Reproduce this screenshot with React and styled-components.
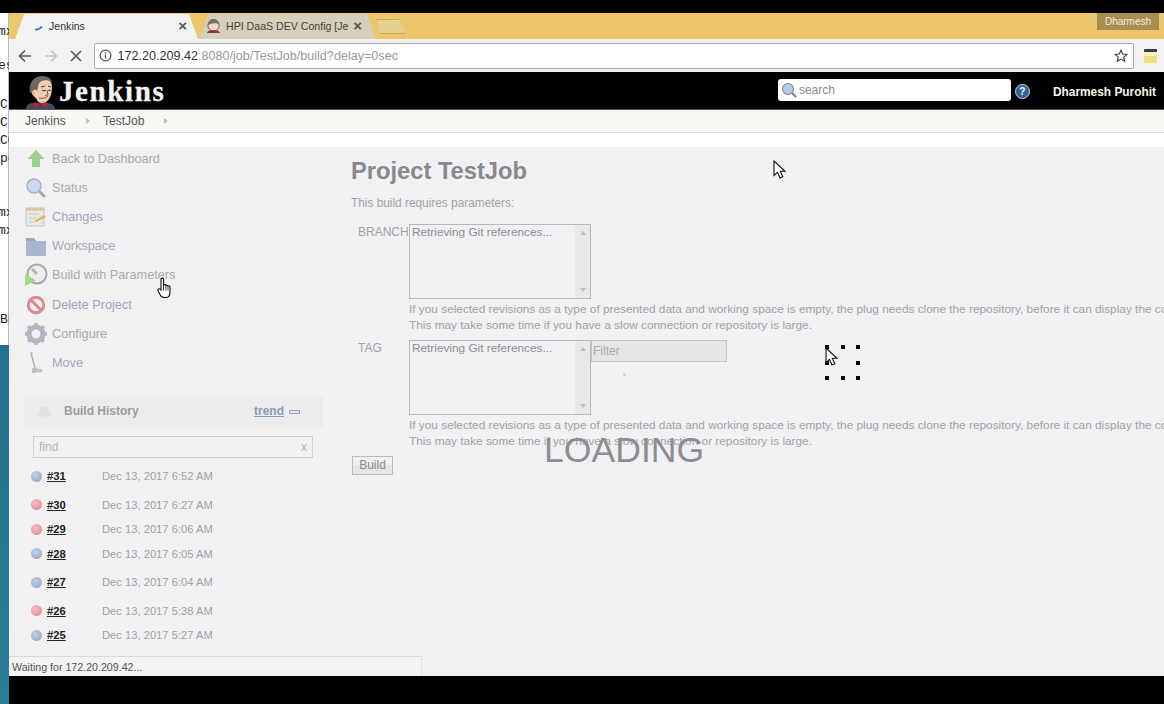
import styled, { createGlobalStyle } from "styled-components";

const GlobalStyle = createGlobalStyle`
  html, body {
    margin: 0;
    padding: 0;
    height: 704px;
    overflow: hidden;
    background: #000;
    font-family: "Liberation Sans", Arial, sans-serif;
  }
`;

const Screen = styled.div`
  position: relative;
  width: 1164px;
  height: 704px;
  overflow: hidden;
  display: flex;
  background: #000;
`;

const Desk = styled.div`
  width: 9px;
  flex: none;
  padding-top: 13px;
  display: flex;
  flex-direction: column;
`;
const DeskPaper = styled.div`
  height: 332px;
  background: #fff;
  overflow: hidden;
  box-shadow: inset -1px 0 0 #bbb;
`;
const DeskLine = styled.div`
  margin-top: ${(p) => p.$gap}px;
  margin-left: ${(p) => p.$shift || 0}px;
  height: 14px;
  font: 13px/14px "Liberation Mono", monospace;
  color: #141c2a;
  white-space: nowrap;
`;
const DeskWall = styled.div`
  flex: 1;
  background: linear-gradient(#24708f, #2c7d9c);
`;

const Browser = styled.div`
  flex: 1;
  min-width: 0;
  display: flex;
  flex-direction: column;
  padding-top: 13px;
  padding-bottom: 28px;
`;

const TabStrip = styled.div`
  height: 26px;
  flex: none;
  background: #eec76c;
  display: flex;
  align-items: flex-end;
  padding-left: 6px;
  position: relative;
`;
const Tab = styled.div`
  width: ${(p) => p.$width}px;
  height: 25px;
  margin-right: ${(p) => p.$gap || 0}px;
  background: ${(p) => (p.$active ? "#f2f2f2" : "#d6cfb9")};
  clip-path: polygon(0 100%, 9px 0, calc(100% - 9px) 0, 100% 100%);
  display: flex;
  align-items: center;
  padding: 0 ${(p) => p.$end}px 2px ${(p) => p.$pad}px;
  box-sizing: border-box;
  font-size: 10.6px;
  color: ${(p) => (p.$active ? "#333" : "#444")};
`;
const TabTitle = styled.span`
  flex: 1;
  overflow: hidden;
  white-space: nowrap;
  margin-left: ${(p) => p.$gap}px;
`;
const TabClose = styled.span`
  font-size: 15px;
  line-height: 15px;
  font-weight: bold;
  color: #555;
`;
const NewTab = styled.div`
  width: 30px;
  height: 15px;
  margin-bottom: 5px;
  background: #e6d08f;
  border: 1px solid #c9ab5f;
  box-sizing: border-box;
  clip-path: polygon(0 0, 78% 0, 100% 100%, 12% 100%);
`;
const UserBadge = styled.div`
  position: absolute;
  right: 5px;
  top: 0;
  width: 62px;
  height: 17px;
  background: #a88e52;
  color: #f3eee0;
  font-size: 10px;
  line-height: 17px;
  text-align: center;
`;

const Toolbar = styled.div`
  height: 33px;
  flex: none;
  background: #f2f2f2;
  display: flex;
  align-items: center;
  box-sizing: border-box;
  padding: 0 0 0 8px;
`;
const NavIcon = styled.svg`
  width: 16px;
  height: 16px;
  flex: none;
  margin-right: ${(p) => p.$gap}px;
`;
const Omnibox = styled.div`
  width: 1040px;
  height: 26px;
  flex: none;
  background: #fff;
  border: 1px solid #a9a9a9;
  border-radius: 2px;
  box-sizing: border-box;
  display: flex;
  align-items: center;
  padding: 0 5px 0 4px;
  font-size: 12.6px;
  color: #999;
`;
const Host = styled.span`
  color: #333;
`;
const UrlText = styled.div`
  flex: 1;
  margin-left: 6px;
  white-space: nowrap;
`;
const Extension = styled.div`
  width: 13px;
  height: 14px;
  margin-left: 10px;
  background: linear-gradient(#3a3a3a 0 3px, #f6efc0 3px 7px, #ecdf7d 7px);
  border-radius: 1px;
`;

const Header = styled.div`
  height: 37px;
  flex: none;
  background: #000;
  display: flex;
  align-items: center;
  padding: 0 8px 0 17px;
  border-bottom: 1px solid #555;
`;
const LogoBox = styled.div`
  width: 30px;
  height: 33px;
  flex: none;
  align-self: flex-end;
`;
const Brand = styled.div`
  font: bold 29px/30px "Liberation Serif", serif;
  letter-spacing: 1.6px;
  color: #f4f4f0;
  -webkit-text-stroke: 0.3px #f4f4f0;
  margin-left: 3px;
  margin-right: auto;
`;
const SearchBox = styled.div`
  width: 233px;
  height: 22px;
  margin-bottom: 1px;
  background: #fff;
  border-radius: 3px;
  box-sizing: border-box;
  display: flex;
  align-items: center;
  gap: 2px;
  padding-left: 3px;
  font-size: 12px;
  color: #8b8b8b;
`;
const HelpDot = styled.div`
  width: 13px;
  height: 13px;
  margin: 2px 0 0 4px;
  border-radius: 50%;
  background: #34609c;
  border: 1px solid #c9d5e6;
  color: #fff;
  font: bold 10px/13px "Liberation Sans", sans-serif;
  text-align: center;
`;
const UserName = styled.div`
  margin: 2px 0 0 23px;
  font-size: 11.9px;
  font-weight: bold;
  color: #f6f6ee;
  white-space: nowrap;
`;

const Crumbs = styled.div`
  height: 23px;
  flex: none;
  background: #f8f8f5;
  border-bottom: 1px solid #dcdcd8;
  box-sizing: border-box;
  display: flex;
  align-items: center;
  padding-left: 16px;
  font-size: 12px;
  color: #555;
`;
const Crumb = styled.span`
  width: ${(p) => p.$width}px;
  flex: none;
`;
const CrumbArrow = styled.i`
  width: 0;
  height: 0;
  flex: none;
  margin-right: ${(p) => p.$gap}px;
  border-left: 4px solid #bdbdbd;
  border-top: 3.5px solid transparent;
  border-bottom: 3.5px solid transparent;
`;
const WhiteGap = styled.div`
  height: 14px;
  flex: none;
  background: #fff;
`;

const Page = styled.div`
  flex: 1;
  min-height: 0;
  background: #f1f0f2;
  display: flex;
  overflow: hidden;
`;
const Side = styled.div`
  width: 342px;
  flex: none;
  box-sizing: border-box;
  padding: 0 0 0 15px;
`;
const Tasks = styled.div`
  height: 251px;
  margin-top: -3px;
`;
const Task = styled.div`
  height: 29.2px;
  display: flex;
  align-items: center;
  font-size: 12.7px;
  color: ${(p) => p.$color || "#a9a8b0"};
`;
const TaskIcon = styled.svg`
  width: 24px;
  height: 24px;
  flex: none;
  margin-right: 4px;
`;
const PaneHead = styled.div`
  width: 299px;
  height: 32px;
  background: #ecebed;
  display: flex;
  align-items: center;
  box-sizing: border-box;
  padding-left: 12px;
  font-size: 12px;
  font-weight: bold;
  color: #9c9ba0;
`;
const PaneTitle = styled.span`
  margin-left: 12px;
  flex: none;
  width: 190px;
`;
const Trend = styled.span`
  color: #8f9cb8;
  text-decoration: underline;
`;
const TrendBar = styled.i`
  width: 11px;
  height: 4px;
  margin-left: 5px;
  margin-top: 2px;
  border: 1px solid #98a8c8;
  box-sizing: border-box;
  background: #dfe5f0;
`;
const Find = styled.div`
  width: 280px;
  height: 22px;
  margin: 9px 0 2px 9px;
  border: 1px solid #cfcfd2;
  box-sizing: border-box;
  display: flex;
  justify-content: space-between;
  align-items: center;
  padding: 0 5px;
  font-size: 12px;
  color: #b4b4b6;
`;
const Row = styled.div`
  height: ${(p) => (p.$tall ? 32.5 : 24.5)}px;
  display: flex;
  align-items: center;
  padding-left: 7px;
  font-size: 11.2px;
  color: #a2a1a6;
`;
const Ball = styled.span`
  width: 11px;
  height: 11px;
  flex: none;
  border-radius: 50%;
  background: ${(p) =>
    p.$failed
      ? "radial-gradient(circle at 40% 35%, #f6bcc4, #e5808f)"
      : "radial-gradient(circle at 40% 35%, #c3d1e6, #8da1c4)"};
`;
const BuildNo = styled.a`
  width: 55px;
  flex: none;
  margin-left: 5px;
  font-weight: bold;
  color: #222;
  text-decoration: underline;
`;

const Content = styled.div`
  flex: 1;
  min-width: 0;
  padding: 11px 0 0 0;
  overflow: hidden;
  color: #a3a2a7;
`;
const Title = styled.h1`
  margin: 0;
  font-size: 23.7px;
  line-height: 26px;
  color: #89888c;
`;
const Intro = styled.div`
  margin: 12px 0 0;
  font-size: 11.85px;
  line-height: 14px;
`;
const Param = styled.div`
  display: flex;
  margin-top: ${(p) => p.$gap}px;
`;
const ParamName = styled.div`
  width: 58px;
  flex: none;
  padding: 0 0 0 7px;
  box-sizing: border-box;
  font-size: 12px;
  line-height: 16px;
`;
const ParamBody = styled.div`
  min-width: 0;
`;
const ParamRow = styled.div`
  display: flex;
  align-items: flex-start;
`;
const ListBox = styled.div`
  width: 182px;
  height: 75px;
  flex: none;
  box-sizing: border-box;
  border: 1px solid #b9b8bc;
  display: flex;
  font-size: 11.8px;
  line-height: 14px;
  color: #8f8e94;
`;
const ListText = styled.div`
  flex: 1;
  padding: 0 2px;
`;
const ScrollBar = styled.div`
  width: 15px;
  background: #e9e9ea;
  display: flex;
  flex-direction: column;
  justify-content: space-between;
  align-items: center;
  padding: 6px 0;
`;
const ScrollArrow = styled.i`
  width: 0;
  height: 0;
  border-left: 3px solid transparent;
  border-right: 3px solid transparent;
  ${(p) => (p.$down ? "border-top: 4px solid #bdbdbf;" : "border-bottom: 4px solid #bdbdbf;")}
`;
const FilterBox = styled.div`
  width: 136px;
  height: 22px;
  flex: none;
  box-sizing: border-box;
  border: 1px solid #c4c4c6;
  background: #e6e6e7;
  padding-left: 1px;
  font-size: 12px;
  line-height: 20px;
  color: #aaa9ad;
`;
const Help = styled.div`
  margin-top: 2px;
  font-size: 11.83px;
  line-height: 16px;
  white-space: nowrap;
`;
const BuildButton = styled.div`
  width: 41px;
  height: 19px;
  margin: 7px 0 0 1px;
  box-sizing: border-box;
  border: 1px solid #bcbcbe;
  background: linear-gradient(#f1f0f2 50%, #e6e6e8 50%);
  font-size: 12px;
  line-height: 17px;
  text-align: center;
  color: #8a898d;
`;

const Loading = styled.div`
  position: absolute;
  left: 544px;
  top: 432px;
  font-size: 35.6px;
  line-height: 37px;
  color: #8e8d91;
`;
const Speck = styled.i`
  position: absolute;
  left: 623px;
  top: 373px;
  width: 3px;
  height: 3px;
  border-radius: 50%;
  background: #d2d2d4;
`;
const Spinner = styled.div`
  position: absolute;
  left: 825px;
  top: 345px;
  width: 35px;
  height: 35px;
  display: grid;
  grid-template-columns: repeat(3, 4px);
  grid-template-rows: repeat(3, 4px);
  justify-content: space-between;
  align-content: space-between;
`;
const SpinDot = styled.i`
  background: ${(p) => (p.$off ? "transparent" : "#000")};
`;
const Pointer = styled.svg`
  position: absolute;
  left: ${(p) => p.$x}px;
  top: ${(p) => p.$y}px;
  width: ${(p) => p.$w || 14}px;
  height: ${(p) => p.$h || 20}px;
`;
const StatusBar = styled.div`
  position: absolute;
  left: 9px;
  top: 656px;
  width: 413px;
  height: 20px;
  box-sizing: border-box;
  background: #f3f3f3;
  border-top: 1px solid #d9d9d9;
  border-right: 1px solid #e2e2e2;
  padding-left: 3px;
  font-size: 10.65px;
  line-height: 20px;
  color: #555;
`;

const deskLines = [
  { gap: 12, text: "mx", shift: -2 },
  { gap: 20, text: "es", shift: -2 },
  { gap: 25, text: "Cl" },
  { gap: 4, text: "Cl" },
  { gap: 4, text: "CO" },
  { gap: 4, text: "pe" },
  { gap: 40, text: "mx", shift: -2 },
  { gap: 4, text: "mx", shift: -2 },
  { gap: 75, text: "BF" },
];

const builds = [
  { id: 31, date: "Dec 13, 2017 6:52 AM", tall: true },
  { id: 30, date: "Dec 13, 2017 6:27 AM", failed: true },
  { id: 29, date: "Dec 13, 2017 6:06 AM", failed: true },
  { id: 28, date: "Dec 13, 2017 6:05 AM" },
  { id: 27, date: "Dec 13, 2017 6:04 AM", tall: true },
  { id: 26, date: "Dec 13, 2017 5:38 AM", failed: true },
  { id: 25, date: "Dec 13, 2017 5:27 AM" },
];

const helpText =
  "If you selected revisions as a type of presented data and working space is empty, the plug needs clone the repository, before it can display the content.";
const helpText2 = "This may take some time if you have a slow connection or repository is large.";

function ButlerLogo() {
  return (
    <svg viewBox="0 0 30 33" width="30" height="33">
      <path d="M0 33c0-4 3-6 8-6h12c5 0 9 2 9 6z" fill="#3d4d63" />
      <path d="M7 11C7 4 11 1 16 1c6 0 10 4 10 10 0 8-3 16-10 16-3 0-5-2-6-5-2 0-3-5-3-11z" fill="#efcdb0" />
      <path d="M4 17C2 7 8 0 16 0c5 0 9 2 10 6-5-3-11-2-13 1-1 3-1 6-2 8-1-2-3-2-4 0-1 1-2 2-3 2z" fill="#6a6661" />
      <path d="M8 15c-2-1-3 1-2 3s2 3 3 2z" fill="#e3b293" />
      <path d="M15 11l4-1M22 10l3 1M16 14c1 1 3 1 4 0M22 14c1 1 2 0 3 0" stroke="#3a3a3a" strokeWidth="1" fill="none" />
      <path d="M21 14l1 5-3 .5M13 22c4 1 7 0 9-2" stroke="#8a5a45" strokeWidth="1" fill="none" />
      <path d="M8 26l6 2.500-6 3.500zM21 26l-6 2.500 6 3.500z" fill="#c8202c" />
      <circle cx="14.500" cy="29" r="1.600" fill="#a81822" />
    </svg>
  );
}

function TabFavicon() {
  return (
    <svg viewBox="0 0 16 16" width="15" height="15">
      <circle cx="8" cy="8" r="6" fill="#ecd9c6" stroke="#6b5a4d" />
      <path d="M2 8c0-5 3-7 6-7s6 2 6 6c-3-2-8-2-12 1z" fill="#77706a" />
      <path d="M1 16c1-3 4-3 7-3s6 0 7 3z" fill="#8a3a30" />
    </svg>
  );
}

function HandCursor() {
  return (
    <Pointer $x={157} $y={277} $w={15} $h={22} viewBox="0 0 15 22">
      <path
        d="M4 2.200c0-1.500 2.500-1.500 2.500 0V9l.4-1.400c1-.6 2 0 2 .8.8-.6 2-.2 2.100.7.8-.4 2 0 2 1V15c0 3-1.500 5.500-4 5.500H7c-2 0-3-1-4-3L1 13.500c-.5-1.200.9-2.300 2-1.300l1 1z"
        fill="#fff"
        stroke="#111"
        strokeWidth="1.100"
      />
      <path d="M6.500 9v4.500M8.900 8.500v5M11 9.200v4.300" stroke="#111" strokeWidth="0.8" />
    </Pointer>
  );
}

function Arrow({ x, y }) {
  return (
    <Pointer $x={x} $y={y} viewBox="0 0 14 20">
      <path d="M1 1v14.500l3.500-3.200 2.500 5.700 2.800-1.200-2.500-5.500H12z" fill="#fff" stroke="#111" strokeWidth="1.100" />
    </Pointer>
  );
}

export default function App() {
  return (
    <Screen>
      <GlobalStyle />
      <Desk>
        <DeskPaper>
          {deskLines.map((l, i) => (
            <DeskLine key={i} $gap={l.gap} $shift={l.shift}>
              {l.text}
            </DeskLine>
          ))}
        </DeskPaper>
        <DeskWall />
      </Desk>

      <Browser>
        <TabStrip>
          <Tab $active $width={183} $pad={19} $end={11} $gap={1}>
            <svg viewBox="0 0 10 10" width="10" height="10">
              <path d="M1 8.500c3 .5 5-.5 7-3" stroke="#3f6fd0" strokeWidth="1.600" fill="none" />
            </svg>
            <TabTitle $gap={5}>Jenkins</TabTitle>
            <TabClose>×</TabClose>
          </Tab>
          <Tab $width={177} $pad={7} $end={14}>
            <TabFavicon />
            <TabTitle $gap={5}>HPI DaaS DEV Config [Je</TabTitle>
            <TabClose>×</TabClose>
          </Tab>
          <NewTab />
          <UserBadge>Dharmesh</UserBadge>
        </TabStrip>

        <Toolbar>
          <NavIcon $gap={10} viewBox="0 0 16 16">
            <path d="M14 8H2.500M8 2.500 2.500 8 8 13.500" stroke="#5a5a5a" strokeWidth="1.700" fill="none" />
          </NavIcon>
          <NavIcon $gap={9} viewBox="0 0 16 16">
            <path d="M2 8h11.500M8 2.500 13.500 8 8 13.500" stroke="#c6c6c6" strokeWidth="1.700" fill="none" />
          </NavIcon>
          <NavIcon $gap={9.500} viewBox="0 0 16 16">
            <path d="M3 3l10 10M13 3 3 13" stroke="#5a5a5a" strokeWidth="1.700" fill="none" />
          </NavIcon>
          <Omnibox>
            <svg viewBox="0 0 14 14" width="13" height="13">
              <circle cx="7" cy="7" r="5.800" fill="none" stroke="#555" strokeWidth="1.300" />
              <path d="M7 6v4.200M7 3.600v1.400" stroke="#555" strokeWidth="1.400" />
            </svg>
            <UrlText>
              <Host>172.20.209.42</Host>:8080/job/TestJob/build?delay=0sec
            </UrlText>
            <svg viewBox="0 0 14 14" width="14" height="14">
              <path
                d="M7 1.200l1.700 3.800 4.100.4-3.100 2.700.9 4.100L7 10.100l-3.600 2.100.9-4.100-3.100-2.700 4.100-.4z"
                fill="none"
                stroke="#444"
                strokeWidth="1.200"
              />
            </svg>
          </Omnibox>
          <Extension />
        </Toolbar>

        <Header>
          <LogoBox>
            <ButlerLogo />
          </LogoBox>
          <Brand>Jenkins</Brand>
          <SearchBox>
            <svg viewBox="0 0 16 16" width="16" height="16">
              <circle cx="7" cy="7" r="5.500" fill="#b7cbe2" stroke="#7d8fa6" strokeWidth="1.200" />
              <path d="M11 11l4 4" stroke="#7b7b7b" strokeWidth="2" />
            </svg>
            search
          </SearchBox>
          <HelpDot>?</HelpDot>
          <UserName>Dharmesh Purohit</UserName>
        </Header>

        <Crumbs>
          <Crumb $width={61}>Jenkins</Crumb>
          <CrumbArrow $gap={13} />
          <Crumb $width={61}>TestJob</Crumb>
          <CrumbArrow $gap={0} />
        </Crumbs>
        <WhiteGap />

        <Page>
          <Side>
            <Tasks>
              <Task>
                <TaskIcon viewBox="0 0 24 24">
                  <path d="M12 3l8.500 9H16v8H8v-8H3.500z" fill="#9bd08f" />
                </TaskIcon>
                Back to Dashboard
              </Task>
              <Task>
                <TaskIcon viewBox="0 0 24 24">
                  <circle cx="10" cy="10" r="7" fill="#c9d8ee" stroke="#a8b4c6" strokeWidth="1.500" />
                  <path d="M15 15l6 6" stroke="#a9a9ad" strokeWidth="3" />
                </TaskIcon>
                Status
              </Task>
              <Task $color="#9fa5bb">
                <TaskIcon viewBox="0 0 24 24">
                  <rect x="2" y="3" width="18" height="18" fill="#e9e8e2" stroke="#c4c3bf" />
                  <path d="M2 4.500h18" stroke="#d8c38c" strokeWidth="2" />
                  <path d="M5 9h10M5 13h7M5 17h5" stroke="#c9c8c8" />
                  <path d="M10 16l10-6 2 2-10 5z" fill="#e0b45c" />
                </TaskIcon>
                Changes
              </Task>
              <Task>
                <TaskIcon viewBox="0 0 24 24">
                  <path d="M2 4h8l2 3h10v15H2z" fill="#aab6cb" />
                  <path d="M2 4h8l2 3H2z" fill="#a5a5a9" />
                </TaskIcon>
                Workspace
              </Task>
              <Task>
                <TaskIcon viewBox="0 0 24 24">
                  <circle cx="13" cy="11" r="9.500" fill="#eeeeee" stroke="#a6a7a6" strokeWidth="2" />
                  <path d="M13 11 8 6" stroke="#b5b5a8" strokeWidth="3" />
                  <path d="M1 11l11 6.500L1 23z" fill="#9edb8a" />
                </TaskIcon>
                Build with Parameters
              </Task>
              <Task $color="#a2a5b8">
                <TaskIcon viewBox="0 0 24 24">
                  <circle cx="12" cy="12" r="7.700" fill="#f1f0f2" stroke="#dd8792" strokeWidth="3" />
                  <path d="M6.500 6.500l11 11" stroke="#dd8792" strokeWidth="3" />
                </TaskIcon>
                Delete Project
              </Task>
              <Task>
                <TaskIcon viewBox="0 0 24 24">
                  <circle cx="12" cy="12" r="7" fill="none" stroke="#b4b5c2" strokeWidth="5" />
                  <path
                    d="M12 1v5M12 18v5M1 12h5M18 12h5M4.200 4.200l3.500 3.500M16.300 16.300l3.500 3.500M19.800 4.200l-3.500 3.500M7.700 16.300l-3.500 3.500"
                    stroke="#b4b5c2"
                    strokeWidth="3.500"
                  />
                </TaskIcon>
                Configure
              </Task>
              <Task $color="#a0a6c2">
                <TaskIcon viewBox="0 0 24 24">
                  <path d="M7 2l4 15" stroke="#b3b3b5" strokeWidth="1.500" fill="none" />
                  <path d="M6 2h3M9 17l9 2-1 2-8-1z" stroke="#b3b3b5" fill="#cfcfc8" />
                  <circle cx="10" cy="20" r="2.200" fill="#bdbdb8" />
                </TaskIcon>
                Move
              </Task>
            </Tasks>

            <PaneHead>
              <svg viewBox="0 0 16 12" width="16" height="12">
                <circle cx="5" cy="8.500" r="3" fill="#e2e2e4" />
                <circle cx="9" cy="5.500" r="4.500" fill="#e2e2e4" />
                <circle cx="12.500" cy="9" r="2.500" fill="#e2e2e4" />
                <rect x="3" y="8" width="10" height="3.500" fill="#e2e2e4" />
              </svg>
              <PaneTitle>Build History</PaneTitle>
              <Trend>trend</Trend>
              <TrendBar />
            </PaneHead>
            <Find>
              find
              <span>x</span>
            </Find>
            {builds.map((b) => (
              <Row key={b.id} $tall={b.tall}>
                <Ball $failed={b.failed} />
                <BuildNo>#{b.id}</BuildNo>
                {b.date}
              </Row>
            ))}
          </Side>

          <Content>
            <Title>Project TestJob</Title>
            <Intro>This build requires parameters:</Intro>
            <Param $gap={14}>
              <ParamName>BRANCH</ParamName>
              <ParamBody>
                <ParamRow>
                  <ListBox>
                    <ListText>Retrieving Git references...</ListText>
                    <ScrollBar>
                      <ScrollArrow />
                      <ScrollArrow $down />
                    </ScrollBar>
                  </ListBox>
                </ParamRow>
                <Help>
                  {helpText}
                  <br />
                  {helpText2}
                </Help>
              </ParamBody>
            </Param>
            <Param $gap={7}>
              <ParamName>TAG</ParamName>
              <ParamBody>
                <ParamRow>
                  <ListBox>
                    <ListText>Retrieving Git references...</ListText>
                    <ScrollBar>
                      <ScrollArrow />
                      <ScrollArrow $down />
                    </ScrollBar>
                  </ListBox>
                  <FilterBox>Filter</FilterBox>
                </ParamRow>
                <Help>
                  {helpText}
                  <br />
                  {helpText2}
                </Help>
              </ParamBody>
            </Param>
            <BuildButton>Build</BuildButton>
          </Content>
        </Page>
      </Browser>

      <Speck />
      <Loading>LOADING</Loading>
      <Spinner>
        {[0, 1, 2, 3, 4, 5, 6, 7, 8].map((n) => (
          <SpinDot key={n} $off={n === 4} />
        ))}
      </Spinner>
      <Arrow x={773} y={160} />
      <Arrow x={825} y={347} />
      <HandCursor />
      <StatusBar>Waiting for 172.20.209.42...</StatusBar>
    </Screen>
  );
}
